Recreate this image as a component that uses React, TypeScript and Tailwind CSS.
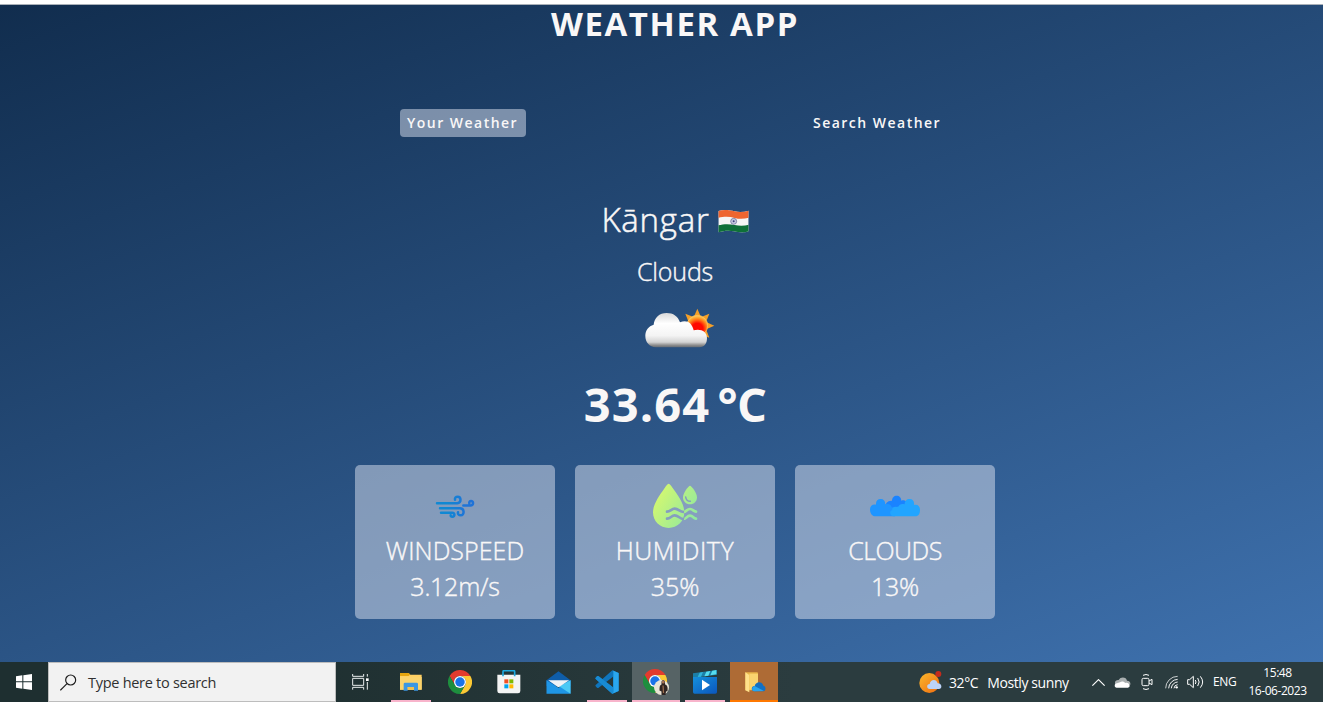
import React from 'react';

function IndiaFlag() {
  return (
    <svg className="w-[31px] h-[23px]" viewBox="0 0 93 69">
      <defs>
        <clipPath id="flag">
          <path d="M1 3 C20 -2 35 1 50 4 C65 7 78 6 92 2 L92 64 C75 70 62 67 48 64 C32 61 18 62 1 67 Z" />
        </clipPath>
      </defs>
      <g clipPath="url(#flag)">
        <rect width="93" height="69" fill="#f5f5f5" />
        <path d="M0 0 H93 V23 C78 27 65 28 50 24 C35 20 20 19 0 24 Z" fill="#ee6530" />
        <path d="M0 46 C20 41 35 42 50 45 C65 48 78 48 93 44 V69 H0 Z" fill="#0e7038" />
        <circle cx="47" cy="34" r="9" fill="#c5c8df" stroke="#5c6290" strokeWidth="2" />
        <circle cx="47" cy="34" r="3" fill="#3f4580" />
      </g>
    </svg>
  );
}

function SunCloud() {
  const spikes = [0, 45, 90, 135, 180, 225, 270, 315];
  return (
    <svg className="w-[72px] h-[42px]" viewBox="190 350 216 126">
      <defs>
        <radialGradient id="sun" cx="0.5" cy="0.65" r="0.6">
          <stop offset="0.45" stopColor="#ff0a00" />
          <stop offset="0.8" stopColor="#ff8a1c" />
          <stop offset="1" stopColor="#ffc04a" />
        </radialGradient>
        <linearGradient id="cloud" x1="0" y1="368" x2="0" y2="472" gradientUnits="userSpaceOnUse">
          <stop offset="0" stopColor="#d9d9d9" />
          <stop offset="0.3" stopColor="#ffffff" />
          <stop offset="0.65" stopColor="#f4f4f4" />
          <stop offset="0.84" stopColor="#d4d4d4" />
          <stop offset="0.93" stopColor="#8c8c8c" />
          <stop offset="1" stopColor="#5f6670" />
        </linearGradient>
      </defs>
      {spikes.map((a) => (
        <path key={a} d="M337 385 L350 355 L363 385 Z" fill="#f5a028" transform={`rotate(${a} 350 406)`} />
      ))}
      <circle cx="350" cy="406" r="31" fill="url(#sun)" stroke="#ffc766" strokeWidth="2" />
      <path
        d="M226 471 C206 470 194 455 194 437 C194 420 204 407 219 403 C221 382 236 368 258 368 C278 368 292 378 298 396 C317 387 334 396 339 420 C362 414 379 425 379 443 C379 459 372 470 356 471 Z"
        fill="url(#cloud)"
      />
    </svg>
  );
}

function WindIcon() {
  return (
    <svg className="w-[40px] h-[25px]" viewBox="255 115 120 75" fill="none" strokeWidth="7.500" strokeLinecap="round">
      <defs>
        <linearGradient id="wind" x1="258" y1="0" x2="372" y2="0" gradientUnits="userSpaceOnUse">
          <stop offset="0.3" stopColor="#1088d3" />
          <stop offset="0.8" stopColor="#1f73d8" />
        </linearGradient>
      </defs>
      <g stroke="url(#wind)">
        <path d="M261 142.5 H322 C335 142 334 123 323 123 C317 123 314 127 315 132" />
        <path d="M270 157.500 H330 C344 158 344 179 332 179 C326 179 323 175 324 170" />
        <path d="M273 171 H306 C316 172 315 183 307 183 C303 183 302 181 302 179" />
        <path d="M340 149.500 H361 C372 149 371 136 363 136 C359 136 357 139 358 143" />
      </g>
    </svg>
  );
}

function HumidityIcon() {
  const waves =
    'M291 170 C302 170 304 161 314 161 C325 161 330 171 340 171 C350 171 350 162 360 162 C369 162 370 169 378 170 M291 191 C302 191 304 181 314 181 C325 181 330 192 340 192 C350 192 350 182 360 182 C369 182 370 190 378 191';
  return (
    <svg className="w-[46px] h-[46px]" viewBox="246 84 138 138">
      <defs>
        <linearGradient id="drop" x1="250" y1="110" x2="380" y2="190" gradientUnits="userSpaceOnUse">
          <stop offset="0" stopColor="#d9f96c" />
          <stop offset="1" stopColor="#8fe8a0" />
        </linearGradient>
        <mask id="holes">
          <rect x="240" y="80" width="150" height="150" fill="#fff" />
          <path d={waves} fill="none" stroke="#000" strokeWidth="8" strokeLinecap="round" />
        </mask>
        <clipPath id="right">
          <path d="M344 150 H390 V210 H336 C342 200 345 186 342 172 Z" />
        </clipPath>
      </defs>
      <path
        mask="url(#holes)"
        d="M296 86 C300 86 304 93 308 99 C326 124 343 148 343 172 C343 199 322 219 296 219 C270 219 249 199 249 172 C249 148 268 122 284 99 C288 93 292 86 296 86 Z"
        fill="url(#drop)"
      />
      <g clipPath="url(#right)">
        <path d={waves} fill="none" stroke="url(#drop)" strokeWidth="8" strokeLinecap="round" />
      </g>
      <path
        d="M360 92 C364 92 381 113 381 127 C381 140 372 148 360 148 C348 148 339 140 339 127 C339 113 356 92 360 92 Z"
        fill="url(#drop)"
      />
      <path d="M347 126 C348 134 353 139 361 139" fill="none" stroke="#849cbd" strokeWidth="4.500" strokeLinecap="round" />
    </svg>
  );
}

function CloudsIcon() {
  return (
    <svg className="w-[50px] h-[22px]" viewBox="255 120 150 66">
      <path d="M300 160 C300 145 308 136 321 137 C321 128 327 122 335 122 C343 122 349 128 349 137 C359 133 368 140 368 152 L330 170 Z" fill="#1a83ff" />
      <path d="M269 184 C258 182 255 172 255 163 C255 153 263 147 273 149 C272 138 278 132 287 132 C296 132 301 138 301 148 C312 144 319 150 320 156 L332 160 L330 184 Z" fill="#1f95ff" />
      <path d="M324 184 C313 180 313 167 322 165 C320 159 327 154 334 156 C336 156 340 155 341 154 C342 148 350 145 359 148 C359 138 365 132 374 132 C383 132 389 139 387 150 C398 147 405 154 405 164 C405 175 402 182 394 184 Z" fill="#22a5ff" />
    </svg>
  );
}

function StatCard({ icon, label, value, labelClass, valueClass }: { icon: React.ReactNode; label: string; value: string; labelClass: string; valueClass: string }) {
  return (
    <div className="flex h-[154px] w-[200px] flex-col items-center rounded-[5px] bg-[#dbe2ef]/50 pt-4">
      <div className="flex h-[50px] items-center justify-center">{icon}</div>
      <p className={`mt-px h-[36px] text-[25px] leading-[36px] whitespace-nowrap [-webkit-text-stroke:0.4px_#f9f7f7] ${labelClass}`}>{label}</p>
      <p className={`h-[36px] text-[25px] leading-[36px] whitespace-nowrap [-webkit-text-stroke:0.4px_#f9f7f7] ${valueClass}`}>{value}</p>
    </div>
  );
}

function ChromeLogo({ profile = false }: { profile?: boolean }) {
  return (
    <svg className={profile ? 'w-[26px] h-[26px]' : 'w-6 h-6'} viewBox={profile ? '0 0 52 52' : '0 0 48 48'}>
      <path d="M3.200 12 A24 24 0 0 1 44.800 12 L24 12 A12 12 0 0 0 13.600 30 Z" fill="#e33b2e" />
      <path d="M44.800 12 A24 24 0 0 1 24 48 L34.400 30 A12 12 0 0 0 24 12 Z" fill="#fcc934" />
      <path d="M24 48 A24 24 0 0 1 3.200 12 L13.600 30 A12 12 0 0 0 34.400 30 Z" fill="#1e8e3e" />
      <circle cx="24" cy="24" r="12" fill="#fff" />
      <circle cx="24" cy="24" r="9.500" fill="#1a73e8" />
      {profile && (
        <g>
          <circle cx="37" cy="37" r="15" fill="#e9e4d6" />
          <path d="M37 26 C37 21 44 21 44 26 L44 31 C49 32 50 38 49 44 L46 45 L45 52 H37 L37 45 L33 43 C33 36 33 32 37 31 Z" fill="#302522" />
          <circle cx="40.500" cy="26" r="3" fill="#a57356" />
          <path d="M40 33 L41 48" stroke="#9c7050" strokeWidth="2.500" />
        </g>
      )}
    </svg>
  );
}

function ExplorerIcon() {
  return (
    <svg className="w-[22px] h-[18px]" viewBox="195 54 66 54">
      <path d="M195 54 H220 L226 59 H260 V104 H195 Z" fill="#ffd063" />
      <path d="M195 54 H220 L226 58 L221 63 H195 Z" fill="#e5a50f" />
      <path d="M195 66 H260 V104 H195 Z" fill="#fbd36c" />
      <path d="M206 107 V87 Q206 83 210 83 H245 Q249 83 249 87 V107 H237 V96 H218 V107 Z" fill="#3c97e2" />
      <rect x="218" y="96" width="19" height="8" fill="#f5c14c" />
    </svg>
  );
}

function StoreIcon() {
  return (
    <svg className="w-[24px] h-[24px]" viewBox="485 47 72 72">
      <path d="M486 61 H555 V110 Q555 117 548 117 H493 Q486 117 486 110 Z" fill="#f4f4f4" />
      <path d="M503 66 V52 Q503 49 506 49 H535 Q538 49 538 52 V66" fill="none" stroke="#1fa9df" strokeWidth="5" />
      <rect x="507" y="75" width="12" height="12" fill="#f25022" />
      <rect x="522" y="75" width="12" height="12" fill="#7fba00" />
      <rect x="507" y="90" width="12" height="12" fill="#00a4ef" />
      <rect x="522" y="90" width="12" height="12" fill="#ffb900" />
    </svg>
  );
}

function MailIcon() {
  return (
    <svg className="w-[25px] h-[23px]" viewBox="0 0 72 69">
      <path d="M0 28 L36 1 L72 28 V45 H0 Z" fill="#0f5da8" />
      <path d="M0 28 V68 H72 V28 L36 50 Z" fill="#1f96e6" />
      <path d="M38 46 L72 68 V28 Z" fill="#4cc9f5" />
      <path d="M5 28 H68 L39 47 Q36 49 33 47 Z" fill="#eff3f7" />
    </svg>
  );
}

function CodeIcon() {
  return (
    <svg className="w-6 h-6" viewBox="0 0 72 72">
      <path d="M52 1 L71 9 V63 L52 71 L2 27 Q0 25 2 23 L6 19 Q9 17 11 19 L54 52 V20 L11 53 Q9 55 6 53 L2 49 Q0 47 2 45 Z" fill="#0f75bc" />
      <path d="M52 1 L71 9 V63 L52 71 Q55 70 55 66 V5 Q55 2 52 1 Z" fill="#2aa7ef" />
      <path d="M2 23 L6 19 Q9 17 11 19 L54 52 V71 H51 L2 27 Q0 25 2 23 Z" fill="#188bd3" />
    </svg>
  );
}

function MoviesIcon() {
  return (
    <svg className="w-[24px] h-[24px]" viewBox="0 0 72 72">
      <defs>
        <linearGradient id="film" x1="0" y1="0" x2="1" y2="1">
          <stop offset="0" stopColor="#1590dc" />
          <stop offset="1" stopColor="#0b56bd" />
        </linearGradient>
      </defs>
      <path d="M0 10 L72 0 V14 L0 24 Z" fill="#1c7fa8" />
      <path d="M40 5 L52 3 L46 17 L34 19 Z M58 2 L70 0 L70 13 L52 16 Z" fill="#56dcef" />
      <path d="M20 8 L30 6 L24 20 L14 21 Z" fill="#2fb4dc" />
      <path d="M0 21 H72 V66 Q72 71 67 71 H5 Q0 71 0 66 Z" fill="url(#film)" />
      <path d="M27 29 L51 45 L27 61 Z" fill="#fff" />
    </svg>
  );
}

function OneDriveFolder() {
  return (
    <svg className="ml-[4px] w-[22px] h-[22px]" viewBox="555 50 66 66">
      <path d="M556 54 H591 Q594 54 594 58 V108 H556 Z" fill="#e9b548" />
      <path d="M556 54 L568 62 V114 L556 108 Z" fill="#ffe08a" />
      <path d="M568 58 H594 V106 H568 Z" fill="#f9d36f" />
      <path d="M583 111 C572 110 573 95 584 95 C588 80 607 81 610 94 C619 95 618 110 610 111 Z" fill="#1270c4" />
      <path d="M583 111 C573 110 575 97 584 95 L612 110 Z" fill="#27a4ee" />
    </svg>
  );
}

function TaskButton({ children, tone = '', line = '' }: { children: React.ReactNode; tone?: string; line?: string }) {
  return (
    <div className={`flex h-10 w-12 flex-col items-center ${tone}`}>
      <div className="flex h-[38px] items-center justify-center pt-[2px]">{children}</div>
      <div className={`h-[2px] ${line}`} />
    </div>
  );
}

function Taskbar() {
  return (
    <footer className="flex h-10 w-[1323px] shrink-0 bg-linear-to-r from-[#1e2f30] from-20% to-[#2b3c3f] to-60% font-['Open_Sans','Noto_Sans',sans-serif] text-white">
      <div className="flex w-12 items-center justify-center">
        <svg className="w-4 h-4" viewBox="0 0 48 48" fill="#fff">
          <path d="M0 7 L19 4 V22 H0 Z M22 3.500 L48 0 V22 H22 Z M0 25 H19 V44 L0 41 Z M22 25 H48 V48 L22 44.500 Z" />
        </svg>
      </div>
      <div className="flex w-[288px] items-center border border-[#bdbdbd] bg-[#f2f2f2] pl-[11px]">
        <svg className="h-[17px] w-[17px]" viewBox="0 0 51 51" fill="none" stroke="#1c1c1c" strokeWidth="3.500">
          <circle cx="32" cy="18" r="15" />
          <path d="M21 29 L1 49" />
        </svg>
        <span className="ml-[11px] pt-px text-[14.500px] tracking-[-0.280px] text-[#303030]">Type here to search</span>
      </div>
      <div className="flex w-12 items-center justify-center">
        <svg className="h-4 w-[17px]" viewBox="0 0 51 48" fill="none" stroke="#e8eded" strokeWidth="3">
          <path d="M2 0 V7 H35 V0 M2 13 H35 V34 H2 Z M2 47 V40 H35 V47 M46 0 V8 M46 24 V47" />
          <rect x="42" y="13" width="8" height="8" fill="#fff" stroke="none" />
        </svg>
      </div>
      <div className="ml-[3px] flex gap-px">
        <TaskButton line="w-10 bg-[#f8b4cb]"><ExplorerIcon /></TaskButton>
        <TaskButton><ChromeLogo /></TaskButton>
        <TaskButton><StoreIcon /></TaskButton>
        <TaskButton><MailIcon /></TaskButton>
        <TaskButton line="w-10 bg-[#f8b4cb]"><CodeIcon /></TaskButton>
        <TaskButton tone="bg-[#566365]" line="w-12 bg-[#f8b4cb]"><ChromeLogo profile /></TaskButton>
        <TaskButton line="w-10 bg-[#f8b4cb]"><MoviesIcon /></TaskButton>
        <TaskButton tone="bg-[#ae6b35]" line="w-12 bg-[#ff7800]"><OneDriveFolder /></TaskButton>
      </div>
      <div className="ml-[141px] flex w-[151px] items-center">
        <svg className="-mt-px h-[23px] w-[23px] shrink-0" viewBox="56 42 69 69">
          <defs>
            <linearGradient id="taskSun" x1="0" y1="0" x2="1" y2="1">
              <stop offset="0" stopColor="#fbb82c" />
              <stop offset="1" stopColor="#ef6c10" />
            </linearGradient>
          </defs>
          <circle cx="87" cy="81" r="30" fill="url(#taskSun)" />
          <path d="M88 99 C78 98 78 84 88 84 C91 68 109 69 112 82 C126 83 126 98 116 99 Z" fill="#bcd3f7" />
          <circle cx="114" cy="54" r="9" fill="#c42b1c" />
        </svg>
        <span className="ml-[7px] text-[14px] tracking-[-0.400px] whitespace-nowrap">32°C</span>
        <span className="ml-[9px] text-[14px] tracking-[-0.400px] whitespace-nowrap">Mostly sunny</span>
      </div>
      <div className="ml-[22px] flex items-center">
        <svg className="h-[7px] w-[13px]" viewBox="0 0 39 21" fill="none" stroke="#fff" strokeWidth="3.500"><path d="M1 20 L19.500 2 L38 20" /></svg>
        <svg className="ml-[9px] h-[11px] w-[17px]" viewBox="0 0 51 33">
          <path d="M4 22 C0 12 8 8 14 9 C20 -3 38 0 39 11 C48 11 50 17 49 23 Z" fill="#a9afb0" />
          <path d="M8 32 C0 32 0 20 9 19 L18 16 C23 11 31 14 34 18 C46 15 52 30 42 32 Z" fill="#fff" />
        </svg>
        <svg className="ml-[10px] h-4 w-[12px]" viewBox="0 0 36 48" fill="none" stroke="#fff" strokeWidth="3">
          <path d="M6 4 Q15 -1 24 4 M6 44 Q15 49 24 44" />
          <rect x="3" y="13" width="21" height="22" rx="4" />
          <path d="M24 21 L33 16 V32 L24 27" />
        </svg>
        <svg className="ml-[12px] h-[14px] w-[14px]" viewBox="0 0 42 42" fill="none" stroke="#fff" strokeWidth="2.800">
          <path d="M2 40 A36 36 0 0 1 38 4" opacity="0.8" />
          <path d="M11 40 A28 28 0 0 1 38 13" />
          <path d="M19 40 A20 20 0 0 1 38 21" />
          <path d="M27 40 A12 12 0 0 1 38 29" />
          <circle cx="35" cy="37" r="3.500" fill="#fff" stroke="none" />
        </svg>
        <svg className="ml-[8px] h-[14px] w-[17px]" viewBox="0 0 51 42" fill="none" stroke="#fff" strokeWidth="3">
          <path d="M2 14 H8 L19 4 V38 L8 28 H2 Z" />
          <path d="M25 15 Q29 21 25 27 M32 9 Q41 21 32 33 M40 4 Q54 21 40 38" />
        </svg>
        <span className="ml-[9px] w-[24px] text-[12px] tracking-[-0.400px]">ENG</span>
      </div>
      <div className="ml-[10px] flex w-[61px] flex-col items-center pt-[2px] text-[12px] leading-[18px] tracking-[-0.450px] whitespace-nowrap">
        <span>15:48</span>
        <span>16-06-2023</span>
      </div>
    </footer>
  );
}

export default function App() {
  return (
    <div className="flex h-[702px] w-[1323px] flex-col overflow-hidden bg-white pt-1">
      <main className="flex h-[658px] w-[1350px] shrink-0 flex-col items-center border-t border-[#a9b0b8] bg-linear-[160deg,#112d4e_0%,#3f72af_100%] font-['Open_Sans','Noto_Sans',sans-serif] font-light text-[#f9f7f7]">
        <h1 className="-mt-px h-10 text-[33px] leading-[40px] font-bold tracking-[1.600px] whitespace-nowrap">WEATHER APP</h1>
        <nav className="mt-[65px] flex w-[550px] justify-between text-[14px] leading-7 font-semibold tracking-[1.480px]">
          <button className="h-7 w-[126px] rounded-[4px] bg-[#dbe2ef]/50 pl-[7px] text-left whitespace-nowrap">Your Weather</button>
          <button className="h-7 w-[144px] pl-[7px] text-left whitespace-nowrap">Search Weather</button>
        </nav>
        <div className="mt-[59px] flex h-12 items-center gap-[8px]">
          <p className="text-[33px] leading-[48px] tracking-[0.750px] [-webkit-text-stroke:0.5px_#f9f7f7]">Kāngar</p>
          <div className="pt-[2px]"><IndiaFlag /></div>
        </div>
        <p className="mt-[9px] h-9 text-[25px] leading-[36px] tracking-[-0.150px] [-webkit-text-stroke:0.4px_#f9f7f7]">Clouds</p>
        <div className="mt-[18px] ml-[10px]"><SunCloud /></div>
        <p className="mt-[23px] h-16 text-[47px] leading-[64px] font-bold whitespace-nowrap"><span className="tracking-[1.100px]">33.64</span><span className="tracking-[-0.700px] [word-spacing:-4px]"> °C</span></p>
        <section className="mt-[29px] flex gap-5">
          <StatCard icon={<WindIcon />} label="WINDSPEED" value="3.12m/s" labelClass="tracking-[0.050px]" valueClass="tracking-[-0.250px]" />
          <StatCard icon={<HumidityIcon />} label="HUMIDITY" value="35%" labelClass="tracking-[0.550px]" valueClass="" />
          <StatCard icon={<CloudsIcon />} label="CLOUDS" value="13%" labelClass="tracking-[-0.500px]" valueClass="tracking-[-0.300px]" />
        </section>
      </main>
      <Taskbar />
    </div>
  );
}
